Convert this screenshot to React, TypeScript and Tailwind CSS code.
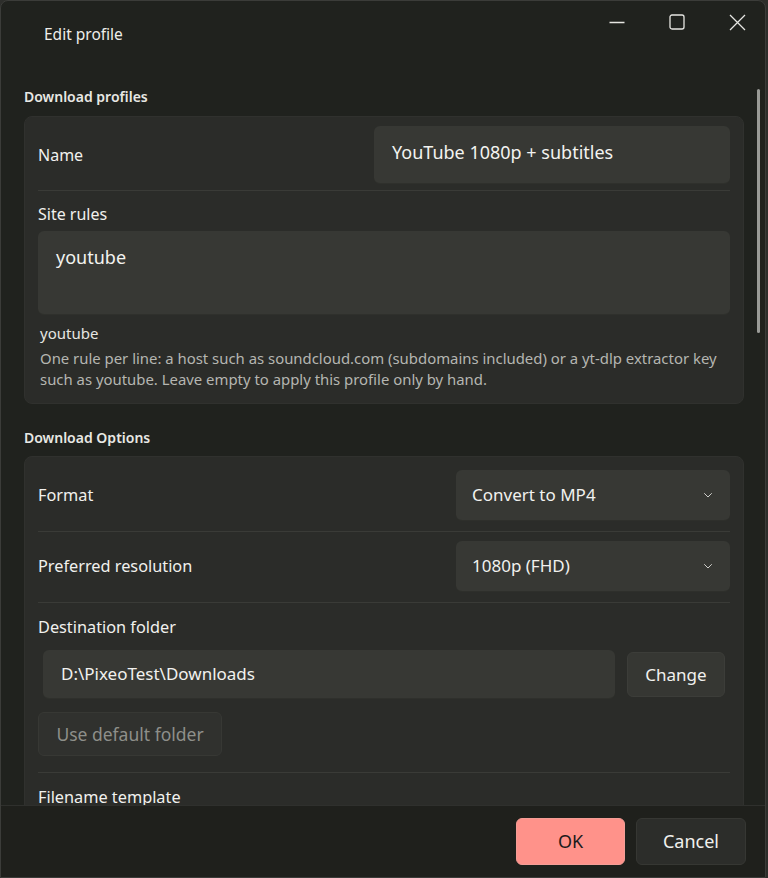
import React from "react"

const font = { fontFamily: '"Noto Sans", "Open Sans", sans-serif' }

function Chevron() {
  return (
    <svg width="12" height="12" viewBox="0 0 12 12" fill="none" className="text-[#cfcfcb]">
      <path d="M2.5 4.5 L6 8 L9.5 4.5" stroke="currentColor" strokeWidth="1" strokeLinecap="round" strokeLinejoin="round" />
    </svg>
  )
}

function Select({ value }: { value: string }) {
  return (
    <div className="w-[274px] h-[51px] rounded-md bg-[#373834] border-b border-[#2e2f2b] flex items-center justify-between pl-4 pr-[16px]">
      <span className="text-[17px] text-[#f1f1ee]">{value}</span>
      <Chevron />
    </div>
  )
}

function Divider() {
  return <div className="h-px bg-[#3a3b37] mx-[13px]" />
}

export default function EditProfileDialog() {
  return (
    <div className="w-[768px] h-[878px] bg-[#2d2e2b] flex" style={font}>
      <div className="w-[766px] h-full bg-[#20221e] border border-[#3b3c39] rounded-t-lg flex flex-col overflow-hidden relative">
        {/* Title bar */}
        <div className="h-[66px] shrink-0 flex items-start justify-between">
          <div className="pl-[43px] pt-[22px] text-[15.5px] text-[#eeeeea]">Edit profile</div>
          <div className="flex text-[#e6e6e2]">
            <div className="w-[54px] h-[42px] flex items-center justify-center">
              <svg width="16" height="16" viewBox="0 0 16 16"><path d="M0.5 8.5 H15.5" stroke="currentColor" strokeWidth="1.5" /></svg>
            </div>
            <div className="w-[66px] h-[42px] flex items-center justify-center">
              <svg width="16" height="16" viewBox="0 0 16 16" fill="none"><rect x="1" y="1" width="14" height="14" rx="2" stroke="currentColor" strokeWidth="1.3" /></svg>
            </div>
            <div className="w-[55px] h-[42px] flex items-center justify-center">
              <svg width="17" height="17" viewBox="0 0 17 17" fill="none"><path d="M1 1 L16 16 M16 1 L1 16" stroke="currentColor" strokeWidth="1.3" /></svg>
            </div>
          </div>
        </div>

        {/* Scrollable settings */}
        <div className="flex-1 overflow-hidden relative pl-[23px] pr-[21px]">
          <div className="absolute right-[5px] top-[22px] w-[3px] h-[244px] rounded-full bg-[#9a9b97]" />

          <div className="pt-[20px] text-[14px] font-semibold text-[#e8e8e4] leading-5">Download profiles</div>
          <div className="mt-[9px] rounded-lg bg-[#2b2c29] border border-[#30312e] pb-[13px]">
            <div className="flex items-center justify-between pl-[13px] pr-[13px] pt-[9px] pb-[6px]">
              <span className="text-[16px] text-[#f1f1ee] -mt-px">Name</span>
              <div className="w-[356px] h-[58px] rounded-md bg-[#373834] border-b border-[#2f302c] flex items-center pl-[18px] pb-[4px]">
                <span className="text-[18px] text-[#f3f3f0]">YouTube 1080p + subtitles</span>
              </div>
            </div>
            <Divider />
            <div className="px-[13px]">
              <div className="mt-[13px] text-[16px] text-[#f1f1ee] leading-5">Site rules</div>
              <div className="mt-[7px] h-[84px] rounded-md bg-[#373834] border-b border-[#2f302c] pl-[18px] pt-[13px]">
                <span className="text-[18px] text-[#f3f3f0]">youtube</span>
              </div>
              <div className="mt-[6px] pl-[2px] text-[15px] text-[#e6e6e2] leading-6">youtube</div>
              <div className="mt-[3px] pl-[2px] text-[14.9px] leading-[21px] text-[#b5b6b1]">
                One rule per line: a host such as soundcloud.com (subdomains included) or a yt-dlp extractor key such as youtube. Leave empty to apply this profile only by hand.
              </div>
            </div>
          </div>

          <div className="mt-[24px] text-[14px] font-semibold text-[#e8e8e4] leading-5">Download Options</div>
          <div className="mt-[8px] rounded-lg bg-[#2b2c29] border border-[#30312e] pb-10">
            <div className="flex items-center justify-between px-[13px] pt-[13px] pb-[10px]">
              <span className="text-[16.3px] text-[#f1f1ee]">Format</span>
              <Select value="Convert to MP4" />
            </div>
            <Divider />
            <div className="flex items-center justify-between px-[13px] pt-[9px] pb-[10px]">
              <span className="text-[16.3px] text-[#f1f1ee]">Preferred resolution</span>
              <Select value="1080p (FHD)" />
            </div>
            <Divider />
            <div className="px-[13px]">
              <div className="mt-[14px] text-[16.3px] text-[#f1f1ee] leading-5">Destination folder</div>
              <div className="mt-[13px] flex items-center gap-3 pl-[5px] pr-[5px]">
                <div className="flex-1 h-[49px] rounded-md bg-[#373834] border-b border-[#2f302c] flex items-center pl-[18px]">
                  <span className="text-[17px] text-[#f1f1ee]">D:\PixeoTest\Downloads</span>
                </div>
                <div className="w-[98px] h-[45px] rounded-md bg-[#363733] border border-[#3c3d39] flex items-center justify-center text-[17px] text-[#f1f1ee]">Change</div>
              </div>
              <div className="mt-[13px] w-[184px] h-[44px] rounded-md bg-[#30312e] border border-[#373834] flex items-center justify-center text-[17.5px] text-[#8e8f8a]">Use default folder</div>
            </div>
            <div className="mt-[16px]" />
            <Divider />
            <div className="px-[13px] mt-[14px] text-[16.3px] text-[#f1f1ee] leading-5">Filename template</div>
          </div>
        </div>

        {/* Footer */}
        <div className="absolute left-0 right-0 bottom-0 h-[72px] bg-[#1f201c] border-t border-[#2f302d] flex items-center justify-end gap-[11px] pr-[19px]">
          <div className="w-[109px] h-[47px] rounded-md bg-[#ff928a] border border-[#f49d96] flex items-center justify-center text-[18px] text-[#1b1b1b]">OK</div>
          <div className="w-[110px] h-[47px] rounded-md bg-[#2c2d2a] border border-[#363733] flex items-center justify-center text-[18px] text-[#f1f1ee]">Cancel</div>
        </div>
      </div>
    </div>
  )
}
